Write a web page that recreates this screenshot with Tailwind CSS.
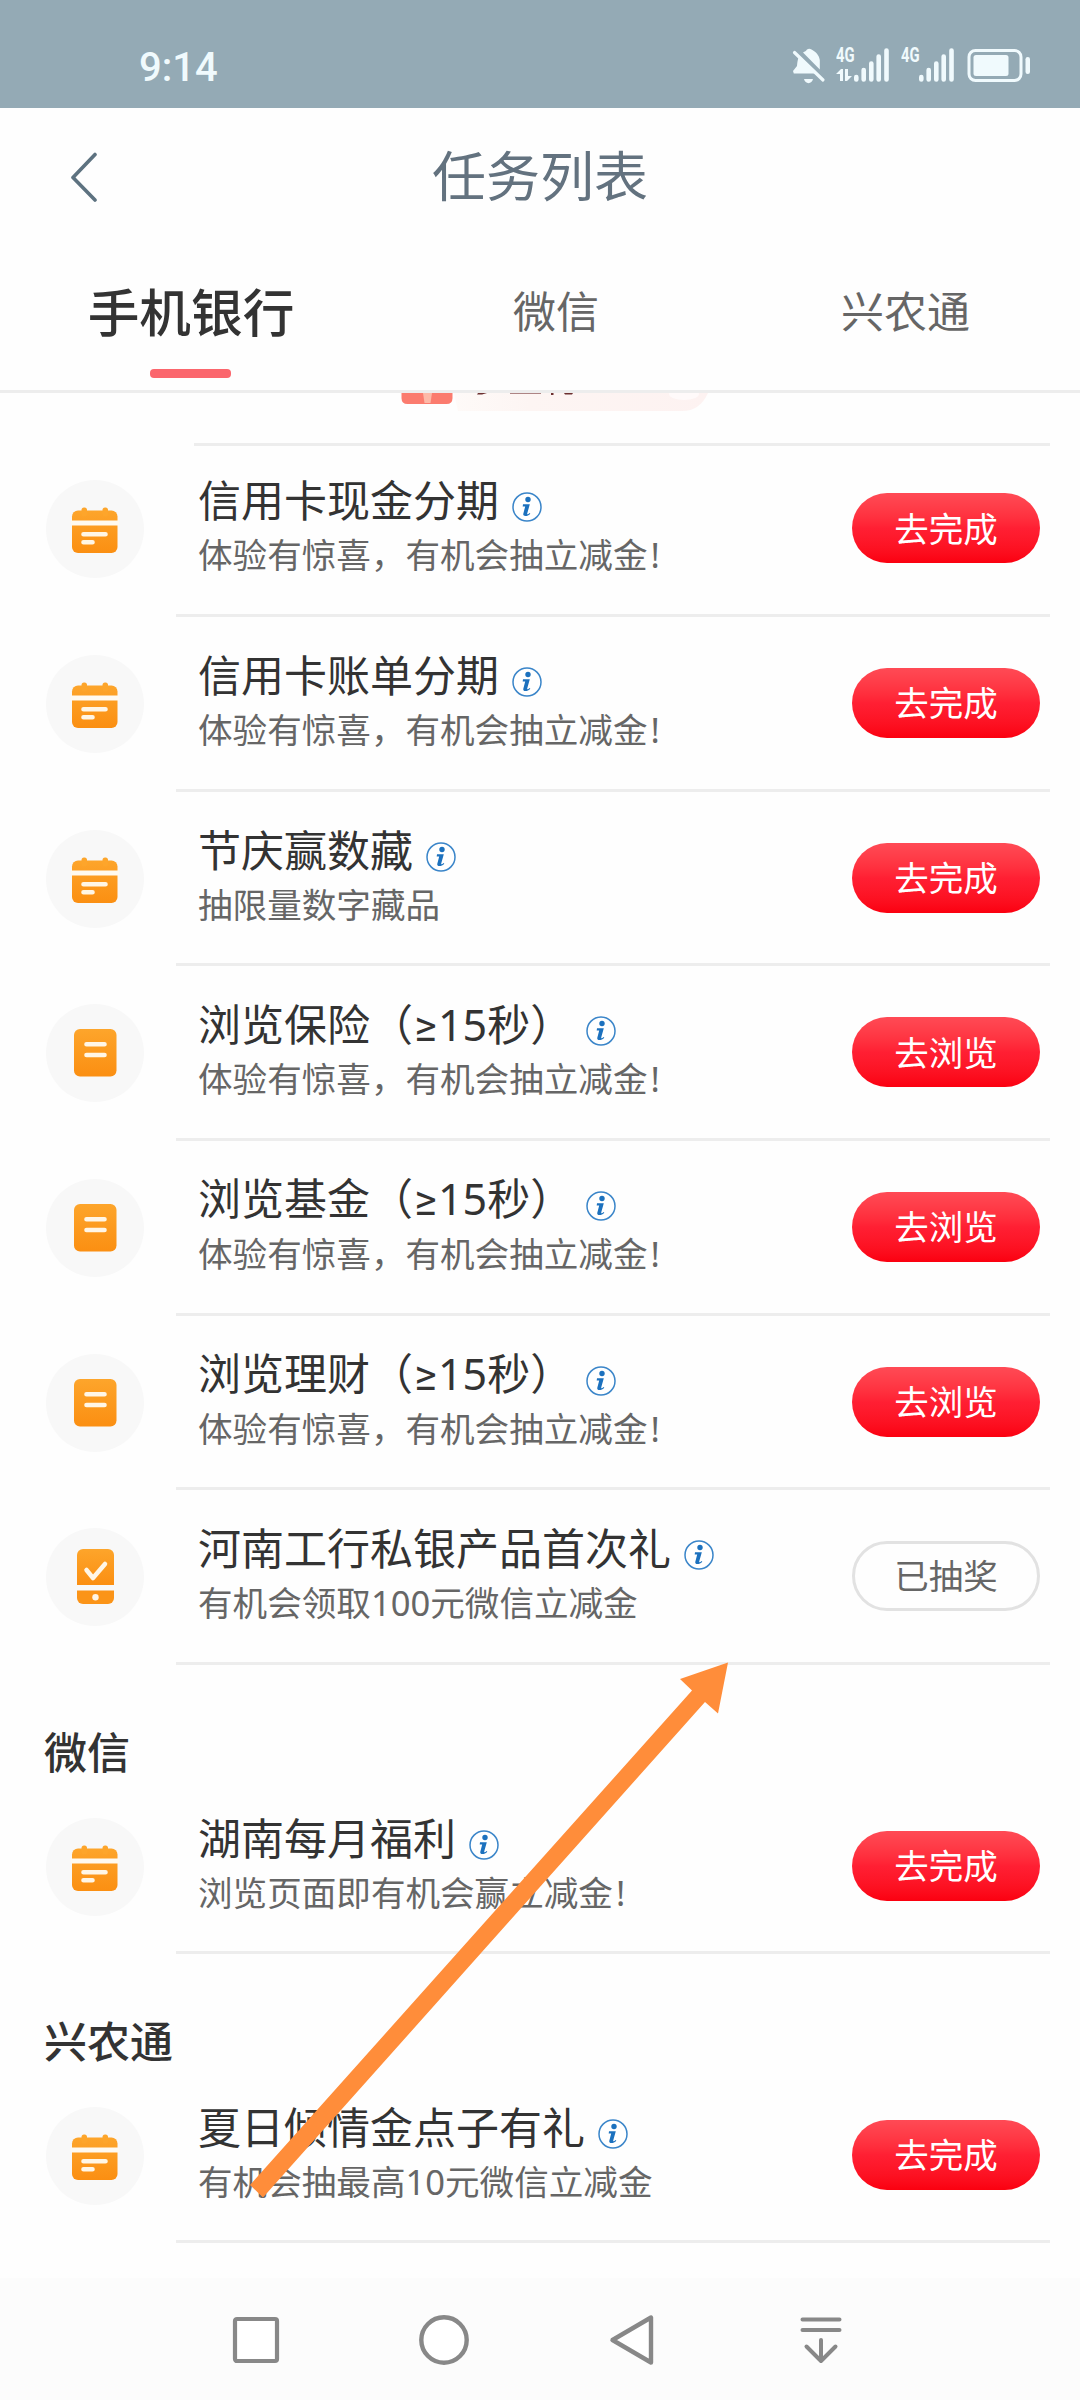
<!DOCTYPE html>
<html lang="zh-CN">
<head>
<meta charset="utf-8">
<title>任务列表</title>
<script src="https://cdn.jsdelivr.net/npm/@tailwindcss/browser@4"></script>
</head>
<body class="bg-white">
<svg class="absolute size-0">
  <defs>
    <linearGradient id="og" x1="0" y1="0" x2="0" y2="1"><stop offset="0" stop-color="#fda52b"/><stop offset="1" stop-color="#fb8f12"/></linearGradient>
    <symbol id="calendar" viewBox="0 0 98 98">
      <rect x="26" y="30.500" width="45.500" height="42.500" rx="6" fill="url(#og)"/>
      <rect x="35.500" y="27.500" width="5.500" height="9" rx="2.500" fill="#fda52b"/>
      <rect x="56.500" y="27.500" width="5.500" height="9" rx="2.500" fill="#fda52b"/>
      <path d="M25 40.500h48v5H25z" fill="#fffaf0"/>
      <path d="M37.500 54.300h22M37.500 62.300h9" stroke="#fff6e6" stroke-width="4.600" stroke-linecap="round"/>
    </symbol>
    <symbol id="note" viewBox="0 0 98 98">
      <rect x="28" y="25" width="42.500" height="47.500" rx="6" fill="url(#og)"/>
      <path d="M40.500 40.300h18M40.500 51h18" stroke="#fff6e6" stroke-width="4.600" stroke-linecap="round"/>
    </symbol>
    <symbol id="phone" viewBox="0 0 98 98">
      <path d="M31 27a6 6 0 0 1 6-6h25a6 6 0 0 1 6 6v30H31z" fill="url(#og)"/>
      <path d="M31 62.500h37V70a6 6 0 0 1-6 6H37a6 6 0 0 1-6-6z" fill="#fb9418"/>
      <path d="M40.500 42l6.500 8 12-14" fill="none" stroke="#fff6e6" stroke-width="4.500" stroke-linecap="round" stroke-linejoin="round"/>
      <circle cx="49.500" cy="69.300" r="3.200" fill="#fff6e6"/>
    </symbol>
    <symbol id="info" viewBox="0 0 30 30">
      <circle cx="15" cy="15" r="14" fill="#fff" stroke="#3a85c9" stroke-width="1.500"/>
      <circle cx="16" cy="7.500" r="2.700" fill="#1c71be"/>
      <path d="M11 12.300h6.800l-2.600 9.200c-.2 1.200.8 1 2.500-.5l.6.700c-2.300 2.800-7.800 3.500-7 .0l1.900-7.300H10.700z" fill="#1c71be"/>
    </symbol>
    <symbol id="bars" viewBox="0 0 36 36">
      <path d="M2.300 29v2.500M9.700 22v9.500M17.300 15.500v16M24.700 8.500v23M32.500 2.500v29" stroke="#f0fafd" stroke-width="4.600" stroke-linecap="round"/>
    </symbol>
  </defs>
</svg>

<div class="relative flex h-[2400px] w-[1080px] flex-col overflow-hidden bg-[#fefefe] font-['Noto_Sans','Noto_Sans_CJK_SC',sans-serif] text-[#333]">

  <header class="flex h-[108px] shrink-0 items-start justify-between bg-[#94aab5] pt-12 pr-[49px] pl-[139px] text-[#f0fafd]">
    <div class="-mt-[3px] font-[Roboto] text-[40px] leading-[46px] font-medium">9:14</div>
    <div class="flex">
      <svg class="mr-[10px] h-9 w-[34px]" viewBox="0 0 34 36" fill="#f0fafd">
        <path d="M7 9L23.500 25.500H1.800L1 23l4-5c.5-5 .8-7 2-9z"/>
        <path d="M11 4.500c2-1 3-1.500 4-3 1.500-1 3-1 4.500 0C24 4 27 7 27.800 12v9.500z"/>
        <path d="M12 31h9c-1 5.500-8 5.500-9 0z"/>
        <path d="M2.500 4.500L31 32" stroke="#f0fafd" stroke-width="3.200" stroke-linecap="round"/>
      </svg>
      <div class="mr-[1px] flex w-[17px] flex-col">
        <span class="origin-left scale-x-[.74] font-[Roboto] text-[20px] leading-[15px] font-bold">4G</span>
        <svg class="mt-1.5 h-3 w-4" viewBox="0 0 16 12"><path d="M0 5L5 0h2v12H4V5zM16 7l-5 5H9V0h3v7z" fill="#f0fafd"/></svg>
      </div>
      <svg class="mr-[11px] h-9 w-9"><use href="#bars"/></svg>
      <span class="mr-[1px] w-[17px] origin-left scale-x-[.74] font-[Roboto] text-[20px] leading-[15px] font-bold">4G</span>
      <svg class="mr-[12px] h-9 w-9"><use href="#bars"/></svg>
      <svg class="h-9 w-[64px]" viewBox="0 0 64 36">
        <rect x="2" y="2.500" width="52" height="30" rx="6.500" fill="none" stroke="#f0fafd" stroke-width="3"/>
        <rect x="6.500" y="7" width="35" height="21" rx="2.500" fill="#f0fafd"/>
        <rect x="58.500" y="9" width="4.500" height="17" rx="2.200" fill="#f0fafd"/>
      </svg>
    </div>
  </header>

  <div class="grid h-[136px] shrink-0 grid-cols-[120px_1fr_120px] items-center">
    <svg class="mt-0.5 ml-[69px] h-[50px] w-[30px]" viewBox="0 0 30 50"><path d="M26 2.500L4 25.500 26 48" fill="none" stroke="#5d7280" stroke-width="3.600" stroke-linecap="round" stroke-linejoin="round"/></svg>
    <h1 class="text-center text-[54px] text-[#63727f]">任务列表</h1>
  </div>

  <nav class="flex h-[149px] shrink-0 border-b-[3px] border-[#ededed] pl-[87px] text-[43px] text-[#666]">
    <div class="flex w-[208px] flex-col items-center">
      <span class="mt-7 h-20 text-[51.7px] leading-[80px] font-medium whitespace-nowrap text-[#333]">手机银行</span>
      <span class="mt-[17px] mr-[2px] h-[9px] w-[81px] rounded-[4px] bg-[#fb666d]"></span>
    </div>
    <span class="ml-[218px] pt-7 leading-[80px]">微信</span>
    <span class="ml-[242px] pt-7 leading-[80px]">兴农通</span>
  </nav>

  <div class="-mb-[3.7px] flex h-[53px] shrink-0 flex-col justify-between">
    <svg class="ml-[400px] h-[20px] w-[320px]" viewBox="0 0 320 20">
      <defs><linearGradient id="pk"><stop offset="0" stop-color="#fefaf8"/><stop offset=".3" stop-color="#fdf5f3"/><stop offset="1" stop-color="#fdf2f1"/></linearGradient></defs>
      <path d="M54 0H308q-8 18-26 18H58z" fill="url(#pk)"/>
      <ellipse cx="284" cy="1" rx="15" ry="6" fill="#fffafa"/>
      <path d="M1.500 0h51v5q0 6-6 6h-39q-6 0-6-6z" fill="#fb7c6f"/>
      <path d="M23 0h9l-1.500 10h-6z" fill="#fdb9a8"/>
      <path d="M78 0h9l-5 1.500h-5zM151 0h2.500v2H151zM164 0h9l-1 1.500h-7z" fill="#6d3030"/>
      <path d="M110 0h31v.800h-31z" fill="#9a6a6a"/>
    </svg>
    <div class="ml-[194px] h-[3px] w-[856px] bg-[#ededed]"></div>
  </div>

  <main id="list" class="flex flex-col"></main>

  <footer class="mt-auto flex h-[122px] shrink-0 items-center bg-[#fcfcfc] pl-[231px]">
    <svg class="h-[54px] w-[50px]" viewBox="0 0 50 54"><rect x="4" y="7" width="42" height="42" rx="2" fill="#fff" stroke="#888" stroke-width="4.200"/></svg>
    <svg class="ml-[136px] h-[54px] w-[54px]" viewBox="0 0 54 54"><circle cx="27" cy="28" r="22.700" fill="#fff" stroke="#888" stroke-width="4.400"/></svg>
    <svg class="ml-[137px] h-[54px] w-[50px]" viewBox="0 0 50 54"><path d="M43 5.500v45L4.500 28z" fill="#fff" stroke="#888" stroke-width="4.400" stroke-linejoin="round"/></svg>
    <svg class="ml-[140px] h-[54px] w-[46px]" viewBox="0 0 46 54"><path d="M4.500 7.500h37M4.500 18h37M23 28V48.500M8.500 34.500L23 49 37.500 34.500" fill="none" stroke="#888" stroke-width="4" stroke-linecap="round" stroke-linejoin="round"/></svg>
  </footer>

  <svg class="pointer-events-none absolute top-[1650px] left-[240px] h-[560px] w-[500px]" viewBox="240 1650 500 560">
    <path d="M728 1662.500L680 1679l12 11.500L250 2185l13 12.500L705 1702l13 11.500z" fill="#ff8d3a"/>
  </svg>
</div>

<script>
  const thanks = '体验有惊喜，有机会抽立减金!';
  const items = [
    ['calendar', '信用卡现金分期', thanks, '去完成'],
    ['calendar', '信用卡账单分期', thanks, '去完成'],
    ['calendar', '节庆赢数藏', '抽限量数字藏品', '去完成'],
    ['note', '浏览保险（≥15秒）', thanks, '去浏览'],
    ['note', '浏览基金（≥15秒）', thanks, '去浏览'],
    ['note', '浏览理财（≥15秒）', thanks, '去浏览'],
    ['phone', '河南工行私银产品首次礼', '有机会领取100元微信立减金', '已抽奖'],
    '微信',
    ['calendar', '湖南每月福利', '浏览页面即有机会赢立减金!', '去完成'],
    '兴农通',
    ['calendar', '夏日倾情金点子有礼', '有机会抽最高10元微信立减金', '去完成'],
  ];
  const button = (label) => label === '已抽奖'
    ? `<button class="h-[70px] w-[188px] rounded-full border-[3px] border-[#e2e2e2] text-[34.5px] leading-[62px] text-[#666]">${label}</button>`
    : `<button class="h-[70px] w-[188px] rounded-full bg-linear-to-b from-[#ff4a55] via-[#ff1f33] via-50% to-[#fb000f] text-[34.5px] leading-[67px] text-white">${label}</button>`;
  const title = (s) => s.replace('≥', '<span class="inline-block w-[25px] text-center font-[Roboto]">≥</span>');
  const note = (s) => s.replace('!', '<span class="ml-[3px]">!</span>');
  document.getElementById('list').innerHTML = items.map((it) => typeof it === 'string'
    ? `<h2 class="flex h-[114.6px] items-center pt-[61px] pl-[44px] text-[43px] leading-[60px] font-medium">${it}</h2>`
    : `<section class="flex h-[174.67px] pl-[46px]">
        <div class="mt-[38px] flex size-[98px] shrink-0 rounded-full bg-[#f8f8f8]"><svg class="size-[98px]"><use href="#${it[0]}"/></svg></div>
        <div class="ml-8 flex w-[874px] justify-between border-b-[3px] border-[#ededed] pr-[10px] pl-[22px]">
          <div class="pt-[29px]">
            <h3 class="flex h-[60px] items-center text-[43px] leading-[60px] whitespace-nowrap"><span>${title(it[1])}</span><svg class="mt-3 ml-[13px] size-[30px]"><use href="#info"/></svg></h3>
            <p class="h-12 text-[34.6px] leading-[48px] whitespace-nowrap text-[#666]">${note(it[2])}</p>
          </div>
          <div class="pt-[51px]">${button(it[3])}</div>
        </div>
      </section>`).join('');
</script>
</body>
</html>
